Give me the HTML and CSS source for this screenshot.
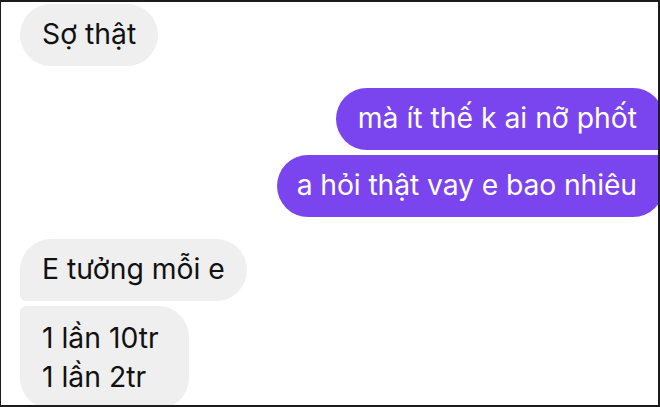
FILE: index.html
```html
<!DOCTYPE html>
<html lang="vi">
<head>
<meta charset="utf-8">
<link rel="stylesheet" href="styles.css">
</head>
<body>
<div class="frame">
  <div class="row left first">
    <div class="bubble in solo">Sợ thật</div>
  </div>
  <div class="row right gap-big">
    <div class="bubble out top">mà ít thế k ai nỡ phốt</div>
  </div>
  <div class="row right gap-small">
    <div class="bubble out bottom wide">a hỏi thật vay e bao nhiêu</div>
  </div>
  <div class="row left gap-big">
    <div class="bubble in top">E tưởng mỗi e</div>
  </div>
  <div class="row left gap-small">
    <div class="bubble in bottom">1 lần 10tr<br>1 lần 2tr</div>
  </div>
</div>
</body>
</html>
```
FILE: styles.css
```css
* { box-sizing: border-box; }
html, body { margin: 0; padding: 0; background: #fff; }
.frame {
  width: 660px;
  height: 407px;
  border: 2px solid #1c1c1c;
  border-top-width: 2px;
  border-left-width: 1px;
  overflow: hidden;
  display: flex;
  flex-direction: column;
  font-family: Inter, "Noto Sans", sans-serif;
  font-size: 28.3px;
  line-height: 39px;
  background: #fff;
}
.row { display: flex; }
.row.left { justify-content: flex-start; padding-left: 19px; }
.row.right { justify-content: flex-end; margin-right: -6px; }
.row.first { margin-top: 2px; }
.gap-big { margin-top: 22px; }
.gap-small { margin-top: 5px; }
.bubble {
  padding: 11px 22px 12px;
  border-radius: 31px;
  white-space: nowrap;
}
.bubble.in { background: #efefef; color: #111; }
.bubble.out { background: #7a45ee; color: #fff; }
.bubble.in.top { border-bottom-left-radius: 6px; }
.bubble.in.bottom { border-top-left-radius: 6px; padding-top: 13px; padding-right: 30px; }
.bubble.out.top { border-bottom-right-radius: 6px; padding-right: 27px; }
.bubble.out.bottom { border-top-right-radius: 6px; padding-right: 27px; padding-left: 20px; letter-spacing: -0.1px; }
```
